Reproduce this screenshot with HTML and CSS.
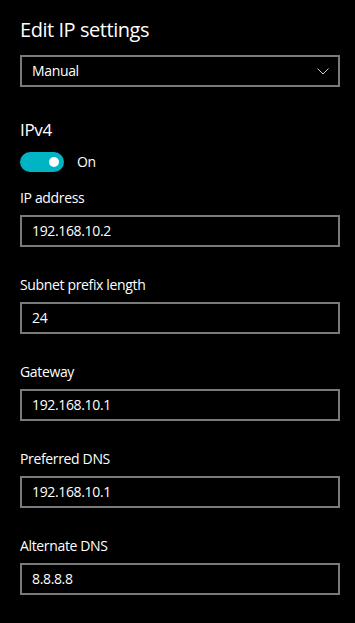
FILE: index.html
```html
<!DOCTYPE html>
<html lang="en">
<head>
<meta charset="utf-8">
<title>Edit IP settings</title>
<link rel="stylesheet" href="styles.css">
</head>
<body>
<main class="panel">
  <h1 class="title">Edit IP settings</h1>
  <div class="select">
    <span class="select-text">Manual</span>
    <svg class="chevron" width="12" height="7" viewBox="0 0 12 7"><path d="M0.5 0.5 L6 6 L11.5 0.5" fill="none" stroke="#cfcfcf" stroke-width="1"/></svg>
  </div>
  <h2 class="subtitle">IPv4</h2>
  <div class="toggle-row">
    <span class="toggle"><span class="knob"></span></span>
    <span class="toggle-label">On</span>
  </div>
  <div class="field field-first">
    <div class="label">IP address</div>
    <div class="input">192.168.10.2</div>
  </div>
  <div class="field">
    <div class="label">Subnet prefix length</div>
    <div class="input">24</div>
  </div>
  <div class="field">
    <div class="label">Gateway</div>
    <div class="input">192.168.10.1</div>
  </div>
  <div class="field">
    <div class="label">Preferred DNS</div>
    <div class="input">192.168.10.1</div>
  </div>
  <div class="field">
    <div class="label">Alternate DNS</div>
    <div class="input">8.8.8.8</div>
  </div>
</main>
</body>
</html>
```
FILE: styles.css
```css
html, body {
  margin: 0;
  padding: 0;
  background: #000;
}
body {
  font-family: "Open Sans", "Noto Sans", sans-serif;
  color: #fff;
  width: 355px;
  height: 623px;
  overflow: hidden;
}
.panel {
  padding: 0 15px 0 20px;
  display: flex;
  flex-direction: column;
}
.title {
  margin: 16px 0 0;
  font-size: 20px;
  line-height: 28px;
  font-weight: 400;
  letter-spacing: -0.45px;
}
.select {
  margin-top: 11px;
  height: 32px;
  box-sizing: border-box;
  border: 2px solid #7a7a7a;
  display: flex;
  align-items: center;
  justify-content: space-between;
  padding: 0 9px 0 10px;
}
.select-text,
.input,
.label,
.toggle-label {
  font-size: 14px;
  line-height: 20px;
  letter-spacing: -0.35px;
}
.chevron {
  display: block;
}
.subtitle {
  margin: 31px 0 0;
  font-size: 17px;
  line-height: 24px;
  font-weight: 400;
  letter-spacing: -0.3px;
}
.toggle-row {
  margin-top: 10px;
  display: flex;
  align-items: center;
  gap: 13px;
  height: 20px;
}
.toggle {
  width: 44px;
  height: 20px;
  border-radius: 10px;
  background: #00b4c4;
  position: relative;
  flex: none;
}
.knob {
  position: absolute;
  right: 5px;
  top: 5px;
  width: 10px;
  height: 10px;
  border-radius: 50%;
  background: #fff;
}
.field {
  margin-top: 28px;
  display: flex;
  flex-direction: column;
  gap: 7px;
}
.field-first {
  margin-top: 16px;
}
.input {
  height: 32px;
  box-sizing: border-box;
  border: 2px solid #7a7a7a;
  padding: 4px 10px;
}
```
